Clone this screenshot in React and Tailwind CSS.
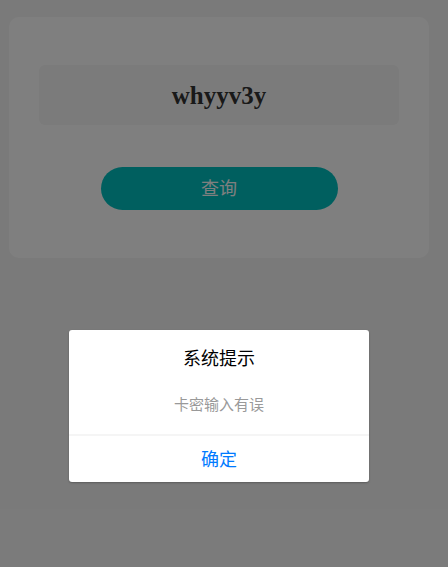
import React from "react";

export default function App() {
  return (
    <div
      className="relative w-[448px] h-[567px] bg-[#f5f5f5] overflow-hidden"
      style={{ fontFamily: '"Noto Sans", "Noto Sans CJK SC", sans-serif' }}
    >
      <div className="w-[438px] pt-[17px] pl-[9px]">
        <div className="w-[420px] h-[241px] bg-white rounded-[10px] flex flex-col items-center pt-[48px]">
          <div className="w-[360px] h-[60px] bg-[#f7f7f7] rounded-[6px] flex items-center justify-center">
            <span
              className="text-[25px] font-bold text-[#333] leading-none"
              style={{ fontFamily: '"Liberation Serif", serif' }}
            >
              whyyv3y
            </span>
          </div>
          <button className="mt-[42px] w-[237px] h-[43px] rounded-full bg-[#00bebe] text-white text-[18px] flex items-center justify-center">
            查询
          </button>
        </div>
      </div>

      <div className="absolute inset-0 bg-black/50" />

      <div className="absolute left-[69px] top-[330px] w-[300px] bg-white rounded-[3px] shadow-[0_1px_2px_rgba(0,0,0,0.25)] flex flex-col">
        <div className="pt-[16px] text-center text-[18px] leading-[24px] text-black">系统提示</div>
        <div className="mt-[24px] text-center text-[15px] leading-[20px] text-[#999]">卡密输入有误</div>
        <div className="mt-[20px] h-[2px] bg-[#f5f5f5]" />
        <button className="h-[46px] text-[18px] text-[#007aff] flex items-center justify-center">确定</button>
      </div>
    </div>
  );
}
